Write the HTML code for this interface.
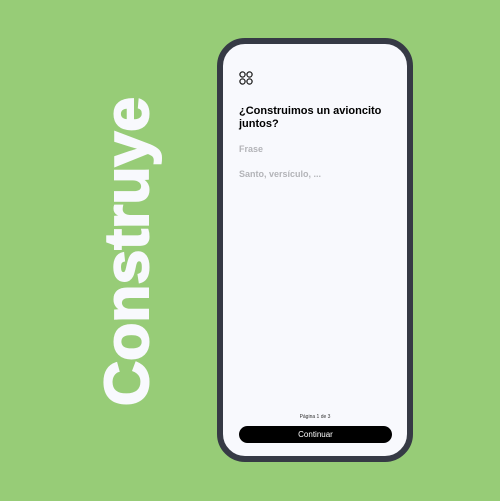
<!DOCTYPE html>
<html><head><meta charset="utf-8"><style>
body{margin:0;width:500px;height:501px;background:#97cc77;position:relative;overflow:hidden;font-family:"Liberation Sans",sans-serif}
.phone{position:absolute;left:217px;top:38px;width:184px;height:412px;border:6px solid #363a45;border-radius:28px;background:#f8f9fd}
.t{position:absolute;left:16px;font-weight:bold;font-size:11px;color:#000;line-height:13px}
.g{position:absolute;left:16px;font-weight:bold;font-size:9px;color:#b3b4b8}
.btn{position:absolute;left:16px;top:382px;width:153px;height:17px;background:#000;border-radius:9px;color:#fff;font-size:8px;text-align:center;line-height:17px}
.pg{position:absolute;left:0;width:184px;top:370px;text-align:center;font-size:5px;color:#333}
</style></head><body>
<svg width="500" height="501" style="position:absolute;left:0;top:0">
<text x="0" y="0" transform="translate(148,406) rotate(-90)" font-family="Liberation Sans" font-weight="bold" font-size="62" fill="#f8f9fd" stroke="#f8f9fd" stroke-width="2" textLength="309" lengthAdjust="spacingAndGlyphs">Construye</text>
</svg>
<div class="phone">
<svg style="position:absolute;left:16px;top:27px" width="14" height="14" viewBox="0 0 14 14" fill="none" stroke="#222" stroke-width="1.3"><circle cx="3.5" cy="3.5" r="2.6"/><circle cx="10.5" cy="3.5" r="2.6"/><circle cx="3.5" cy="10.5" r="2.6"/><circle cx="10.5" cy="10.5" r="2.6"/></svg>
<div class="t" style="top:61px">¿Construimos un avioncito<br>juntos?</div>
<div class="g" style="top:100px">Frase</div>
<div class="g" style="top:125px">Santo, versículo, ...</div>
<div class="pg">Página 1 de 3</div>
<div class="btn">Continuar</div>
</div>
</body></html>
